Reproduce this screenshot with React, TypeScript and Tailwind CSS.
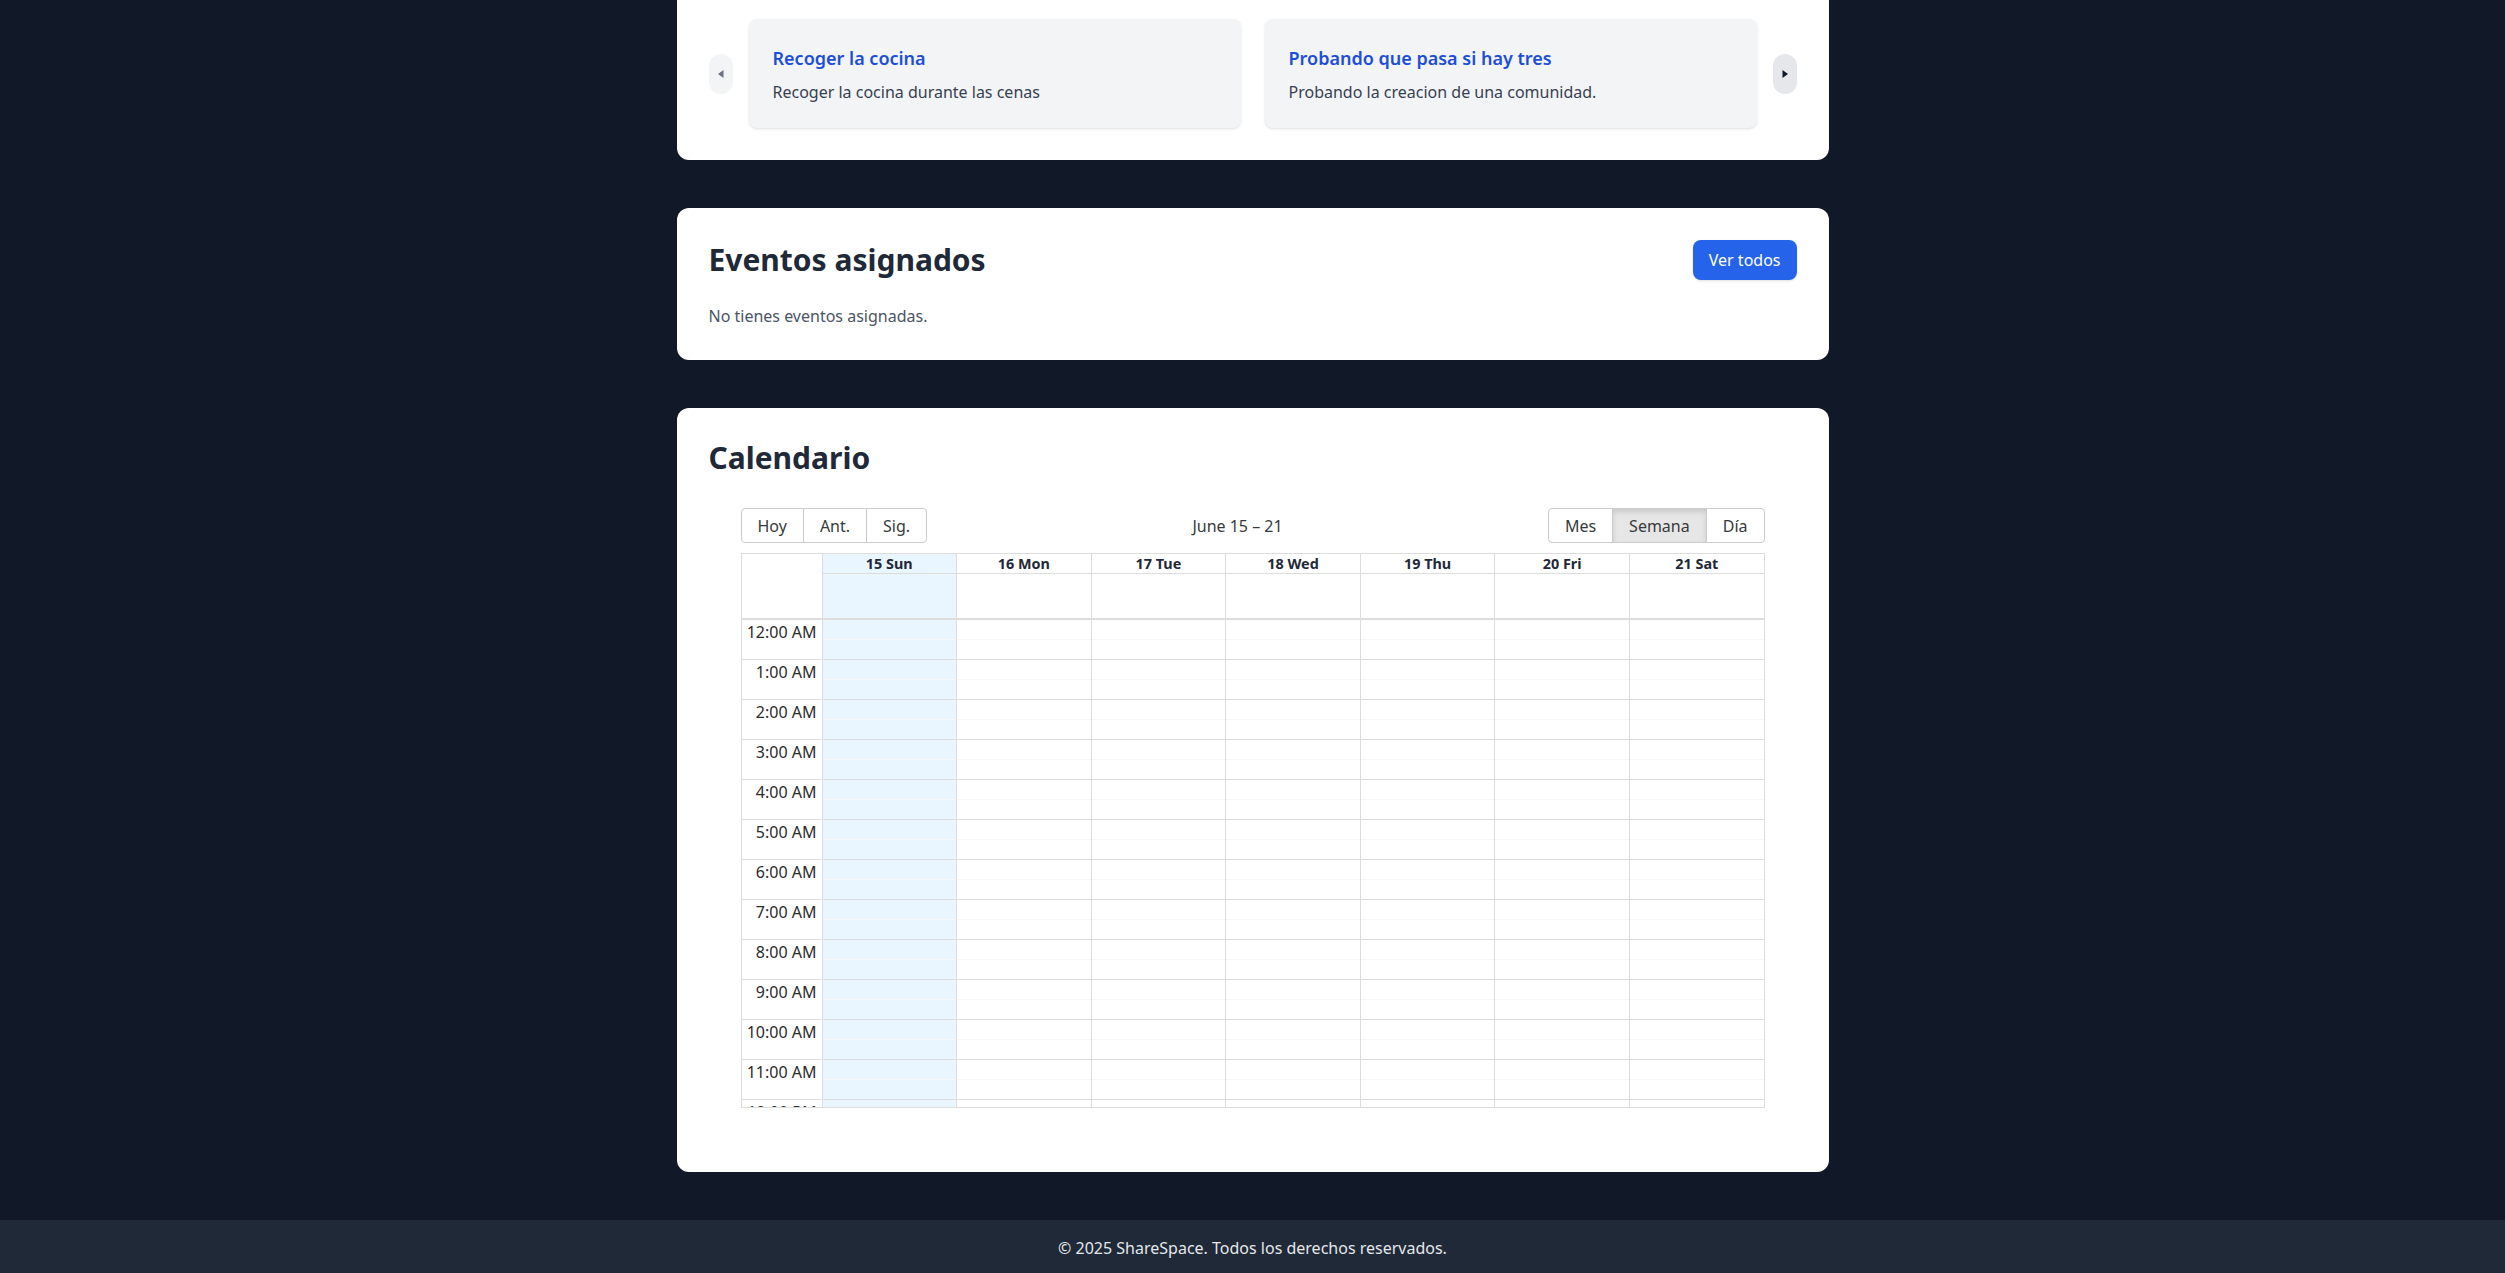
const days = ['15 Sun', '16 Mon', '17 Tue', '18 Wed', '19 Thu', '20 Fri', '21 Sat']

// only the hours that fit in the visible part of the week view
const hours = Array.from({ length: 13 }, (_, i) => {
  const h = i % 12 === 0 ? 12 : i % 12
  return `${h}:00 ${i < 12 ? 'AM' : 'PM'}`
})

const comunidades = [
  { title: 'Recoger la cocina', desc: 'Recoger la cocina durante las cenas' },
  { title: 'Probando que pasa si hay tres', desc: 'Probando la creacion de una comunidad.' },
]

function Toolbar() {
  const btn = 'h-[35px] px-4 border border-[#ccc] text-base text-[#373a3c] -ml-px first:ml-0 first:rounded-l-[4px] last:rounded-r-[4px]'
  return (
    <div className="flex items-center mb-[10px]">
      <div className="flex">
        <button className={btn}>Hoy</button>
        <button className={btn}>Ant.</button>
        <button className={btn}>Sig.</button>
      </div>
      <span className="flex-1 text-center px-[10px] text-base text-[#373a3c]">June 15 – 21</span>
      <div className="flex">
        <button className={btn}>Mes</button>
        <button className={`${btn} bg-[#e6e6e6] border-[#adadad] shadow-[inset_0_3px_5px_rgba(0,0,0,0.125)]`}>Semana</button>
        <button className={btn}>Día</button>
      </div>
    </div>
  )
}

function WeekView() {
  return (
    <div className="flex-1 min-h-0 flex flex-col border border-[#ddd]">
      {/* header */}
      <div className="flex">
        <div className="w-[80px] shrink-0" />
        {days.map((d, i) => (
          <div key={d} className={`flex-1 border-l border-[#ddd] ${i === 0 ? 'bg-[#eaf6ff]' : ''}`}>
            <div className="h-[20px] border-b border-[#ddd] text-center text-[14.4px] leading-[20px] font-bold text-[#1f2937]">{d}</div>
            <div className="h-[44px]" />
          </div>
        ))}
      </div>

      {/* time grid */}
      <div className="flex-1 min-h-0 overflow-hidden flex border-t-2 border-[#ddd]">
        <div className="w-[80px] shrink-0">
          {hours.map((h) => (
            <div key={h} className="h-[40px] border-b border-[#ddd] text-right pr-[5px] text-base leading-6 text-[#2b2b2b]">
              {h}
            </div>
          ))}
        </div>
        {days.map((d, i) => (
          <div key={d} className={`flex-1 border-l border-[#ddd] ${i === 0 ? 'bg-[#eaf6ff]' : ''}`}>
            {hours.map((h) => (
              <div key={h} className="h-[40px] border-b border-[#ddd]">
                <div className="h-[20px] border-b border-[#f7f7f7]" />
              </div>
            ))}
          </div>
        ))}
      </div>
    </div>
  )
}

export default function App() {
  return (
    <div className="min-h-screen bg-[#111827] flex flex-col" style={{ fontFamily: '"Noto Sans", sans-serif' }}>
      <main className="flex-1 w-full max-w-6xl mx-auto pb-12 space-y-12">
        {/* comunidades (scrolled) */}
        <section className="bg-white rounded-b-xl px-8 pt-[19px] pb-8">
          <div className="flex items-center gap-4">
            <button className="w-6 h-10 rounded-full bg-[#f3f4f6] flex items-center justify-center shrink-0">
              <svg width="10" height="10" viewBox="0 0 10 10"><path d="M7.5 1 L2 5 L7.5 9 Z" fill="#6b7280" /></svg>
            </button>
            <div className="flex-1 grid grid-cols-2 gap-6">
              {comunidades.map((c) => (
                <div key={c.title} className="bg-[#f3f4f6] rounded-lg shadow-sm px-6 pt-[25px] pb-6">
                  <h3 className="text-lg font-semibold text-[#1d4ed8]">{c.title}</h3>
                  <p className="mt-2 text-[#374151]">{c.desc}</p>
                </div>
              ))}
            </div>
            <button className="w-6 h-10 rounded-full bg-[#e5e7eb] flex items-center justify-center shrink-0">
              <svg width="10" height="10" viewBox="0 0 10 10"><path d="M2.5 1 L8 5 L2.5 9 Z" fill="#111827" /></svg>
            </button>
          </div>
        </section>

        {/* eventos */}
        <section className="bg-white rounded-xl p-8">
          <div className="flex items-center justify-between">
            <h2 className="text-3xl font-bold text-[#1f2937]">Eventos asignados</h2>
            <button className="h-10 px-4 rounded-lg bg-[#2563eb] text-white shadow-sm">Ver todos</button>
          </div>
          <p className="mt-6 text-[#4b5563]">No tienes eventos asignadas.</p>
        </section>

        {/* calendario */}
        <section className="bg-white rounded-xl p-8">
          <h2 className="text-3xl font-bold text-[#1f2937]">Calendario</h2>
          <div className="p-8">
            <div className="h-[600px] flex flex-col">
              <Toolbar />
              <WeekView />
            </div>
          </div>
        </section>
      </main>

      <footer className="bg-[#1f2937] py-4 text-center text-[#e5e7eb]">
        © 2025 ShareSpace. Todos los derechos reservados.
      </footer>
    </div>
  )
}
